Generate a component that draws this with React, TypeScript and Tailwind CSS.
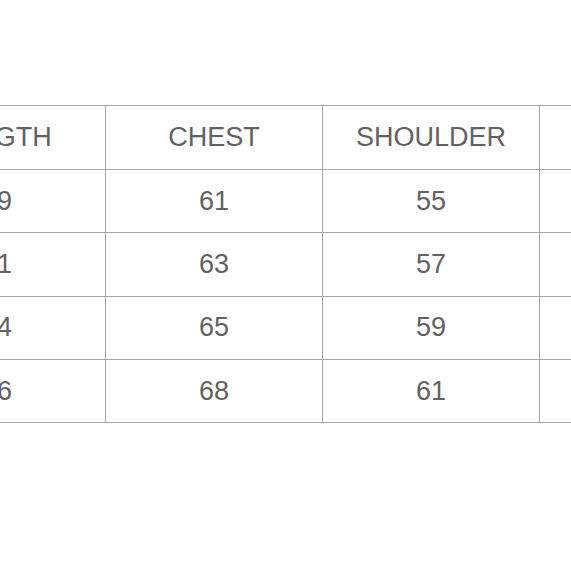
export default function App() {
  const rows = [
    ["69", "61", "55", "60"],
    ["71", "63", "57", "61"],
    ["74", "65", "59", "62"],
    ["76", "68", "61", "63"],
  ];
  const header = ["LENGTH", "CHEST", "SHOULDER", "SLEEVE"];
  return (
    <div className="w-[571px] h-[571px] overflow-hidden bg-white pt-[105px]" style={{ fontFamily: '"Liberation Sans", Arial, sans-serif' }}>
      <table className="ml-[-112px] border-collapse table-fixed w-[868px] text-[27px] text-[#626262]">
        <tbody>
          <tr className="h-[64px]">
            {header.map((h) => (
              <td key={h} className="w-[217px] border-[1.5px] border-[#a4a4a4] text-center align-middle">{h}</td>
            ))}
          </tr>
          {rows.map((r, i) => (
            <tr key={i} className="h-[63.3px]">
              {r.map((c, j) => (
                <td key={j} className="w-[217px] border-[1.5px] border-[#a4a4a4] text-center align-middle">{c}</td>
              ))}
            </tr>
          ))}
        </tbody>
      </table>
    </div>
  );
}
